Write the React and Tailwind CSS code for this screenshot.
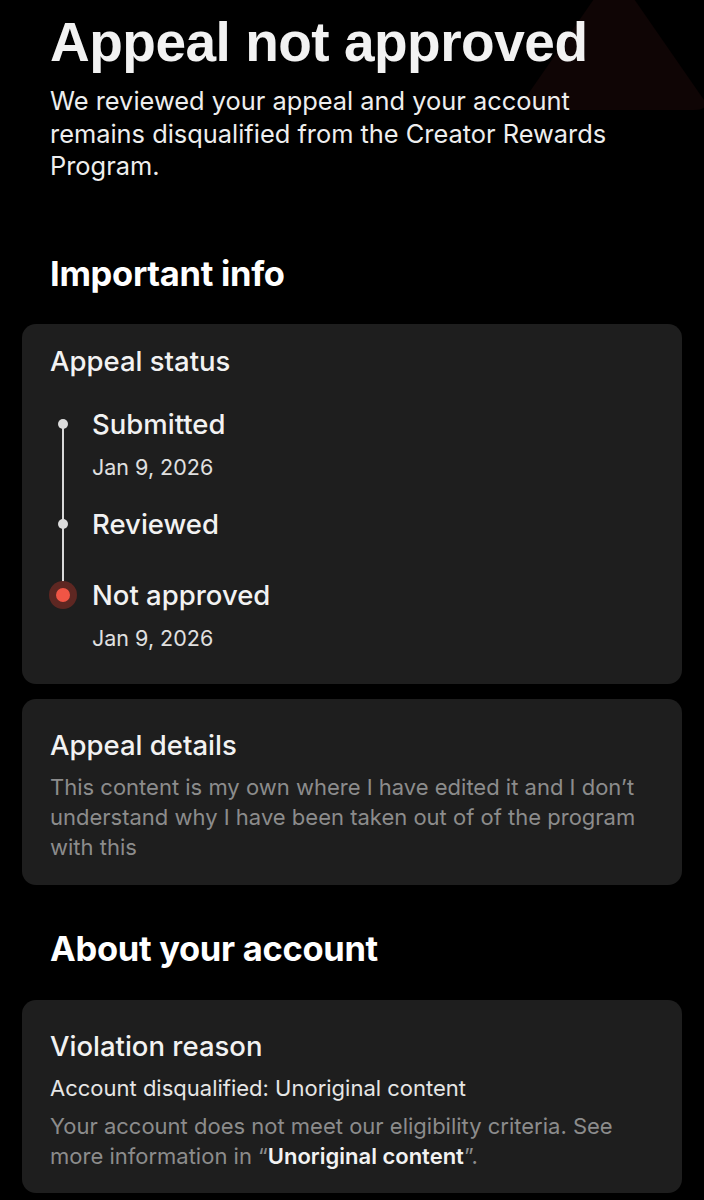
import React from 'react';

const steps = [
  { label: 'Submitted', date: 'Jan 9, 2026', gap: '' },
  { label: 'Reviewed', gap: 'mt-[26px]' },
  { label: 'Not approved', date: 'Jan 9, 2026', current: true, gap: 'mt-[37px]' },
];

const Card = ({ children, className = '' }) => (
  <div className={`bg-[#1e1e1e] rounded-[14px] px-[28px] ${className}`}>{children}</div>
);

const App = () => {
  return (
    <div className="relative min-h-screen bg-black text-white overflow-hidden" style={{ fontFamily: 'Inter, "Noto Sans", sans-serif' }}>
      {/* faint warning triangle behind the header */}
      <svg className="absolute right-[-10px] top-[-30px]" width="200" height="140" viewBox="0 0 200 140">
        <path d="M100 0 L190 130 Q195 140 180 140 L20 140 Q5 140 10 130 Z" fill="#0f0505" />
      </svg>

      <div className="relative px-[22px] pb-[8px]">
        <div className="px-[28px] pt-[13px]">
          <h1 className="text-[55px] leading-[58px] font-bold tracking-[-0.5px] text-[#f2f2f2]" style={{ fontFamily: '"Liberation Sans", Arial, sans-serif' }}>
            Appeal not approved
          </h1>
          <p className="mt-[14px] text-[25.4px] leading-[32.5px] text-[#eeeeee] max-w-[600px]">
            We reviewed your appeal and your account remains disqualified from the Creator Rewards Program.
          </p>
          <h2 className="mt-[71px] text-[34.5px] leading-[40px] font-bold tracking-[-0.3px]">Important info</h2>
        </div>

        <Card className="mt-[30px] pt-[20px] pb-[32px]">
          <h3 className="text-[27.5px] leading-[34px] font-medium text-[#f2f2f2]">Appeal status</h3>
          <div className="relative mt-[29px]">
            <div className="absolute left-[12px] top-[17px] h-[170px] w-[2px] bg-[#d9d9d9]" />
            {steps.map((s) => (
              <div key={s.label} className={`flex ${s.gap}`}>
                <div className="relative w-[42px] shrink-0 h-[34px] flex items-center">
                  {s.current ? (
                    <div className="absolute left-[-1px] w-[28px] h-[28px] rounded-full bg-[#5e2722] flex items-center justify-center">
                      <div className="w-[14px] h-[14px] rounded-full bg-[#f05545]" />
                    </div>
                  ) : (
                    <div className="absolute left-[8px] w-[10px] h-[10px] rounded-full bg-[#dcdcdc]" />
                  )}
                </div>
                <div>
                  <div className="text-[27.5px] leading-[34px] font-medium text-[#f2f2f2]">{s.label}</div>
                  {s.date && <div className="mt-[12px] text-[21.5px] leading-[28px] text-[#e0e0e0]">{s.date}</div>}
                </div>
              </div>
            ))}
          </div>
        </Card>

        <Card className="mt-[15px] pt-[29px] pb-[23px]">
          <h3 className="text-[27.5px] leading-[34px] font-medium text-[#f2f2f2]">Appeal details</h3>
          <p className="mt-[10px] text-[22px] leading-[30px] text-[#8c8c8c]">
            This content is my own where I have edited it and I don’t understand why I have been taken out of of the program with this
          </p>
        </Card>

        <h2 className="px-[28px] mt-[44px] text-[34.5px] leading-[40px] font-bold tracking-[-0.3px]">About your account</h2>

        <Card className="mt-[31px] pt-[29px] pb-[22px]">
          <h3 className="text-[27.5px] leading-[34px] font-medium text-[#f2f2f2]">Violation reason</h3>
          <p className="mt-[10px] text-[22px] leading-[30px] text-[#e6e6e6]">Account disqualified: Unoriginal content</p>
          <p className="mt-[8px] text-[22px] leading-[30px] text-[#8c8c8c]">
            Your account does not meet our eligibility criteria. See more information in “<span className="font-semibold text-[#f2f2f2]">Unoriginal content</span>”.
          </p>
        </Card>
      </div>
    </div>
  );
};

export default App;
